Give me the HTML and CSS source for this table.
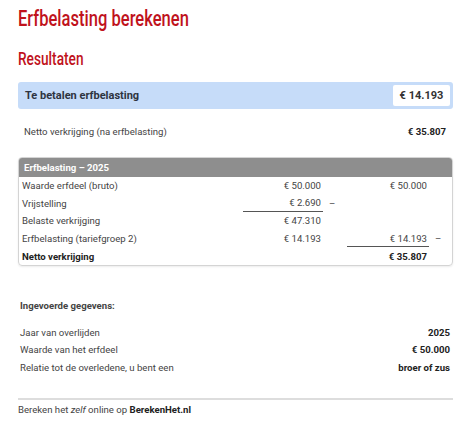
FILE: index.html
```html
<!DOCTYPE html>
<html lang="nl">
<head>
<meta charset="utf-8">
<link rel="stylesheet" href="styles.css">
</head>
<body>
<div class="page">
  <h1 class="title"><span class="narrow">Erfbelasting berekenen</span></h1>
  <h2 class="subtitle"><span class="narrow">Resultaten</span></h2>

  <div class="pay">
    <span class="pay-label">Te betalen erfbelasting</span>
    <span class="pay-value">€ 14.193</span>
  </div>

  <div class="net">
    <span>Netto verkrijging (na erfbelasting)</span>
    <strong>€ 35.807</strong>
  </div>

  <div class="calc">
    <div class="calc-head">Erfbelasting – 2025</div>
    <div class="calc-row">
      <span class="c-label">Waarde erfdeel (bruto)</span>
      <span class="c-a">€ 50.000</span><span class="c-op"></span>
      <span class="c-b">€ 50.000</span><span class="c-op"></span>
    </div>
    <div class="calc-row">
      <span class="c-label">Vrijstelling</span>
      <span class="c-a line">€ 2.690</span><span class="c-op">–</span>
      <span class="c-b"></span><span class="c-op"></span>
    </div>
    <div class="calc-row">
      <span class="c-label">Belaste verkrijging</span>
      <span class="c-a">€ 47.310</span><span class="c-op"></span>
      <span class="c-b"></span><span class="c-op"></span>
    </div>
    <div class="calc-row">
      <span class="c-label">Erfbelasting (tariefgroep 2)</span>
      <span class="c-a">€ 14.193</span><span class="c-op"></span>
      <span class="c-b line">€ 14.193</span><span class="c-op">–</span>
    </div>
    <div class="calc-row total">
      <span class="c-label">Netto verkrijging</span>
      <span class="c-a"></span><span class="c-op"></span>
      <span class="c-b">€ 35.807</span><span class="c-op"></span>
    </div>
  </div>

  <div class="input">
    <div class="input-title">Ingevoerde gegevens:</div>
    <div class="input-row"><span>Jaar van overlijden</span><strong>2025</strong></div>
    <div class="input-row"><span>Waarde van het erfdeel</span><strong>€ 50.000</strong></div>
    <div class="input-row"><span>Relatie tot de overledene, u bent een</span><strong>broer of zus</strong></div>
  </div>

  <div class="footer">Bereken het <em>zelf</em> online op <strong>BerekenHet.nl</strong></div>
</div>
</body>
</html>
```

FILE: styles.css
```css
* { box-sizing: border-box; }
html, body { margin: 0; padding: 0; background: #fff; }
body {
  font-family: Roboto, "Liberation Sans", sans-serif;
  font-size: 9.6px;
  color: #444;
}
.page {
  padding: 6px 21px 0 18px;
}
.title, .subtitle {
  margin: 0;
  font-family: Roboto, "Liberation Sans", sans-serif;
  font-weight: 500;
  color: #c0121c;
}
.narrow {
  display: inline-block;
  transform-origin: left center;
  white-space: nowrap;
}
.title {
  font-size: 21.5px;
  line-height: 26px;
}
.title .narrow { transform: scaleX(0.77); }
.subtitle {
  margin-top: 16px;
  font-size: 18px;
  line-height: 22px;
}
.subtitle .narrow { transform: scaleX(0.76); }
.pay {
  margin-top: 12px;
  height: 27px;
  background: #c6dcf9;
  border-radius: 3px;
  display: flex;
  align-items: center;
  justify-content: space-between;
  padding: 0 3px 0 7px;
}
.pay-label {
  font-weight: 700;
  font-size: 11px;
  color: #2e3440;
}
.pay-value {
  background: #fff;
  height: 21px;
  width: 57px;
  display: flex;
  align-items: center;
  justify-content: center;
  font-weight: 700;
  font-size: 11px;
  color: #333;
  border-radius: 2px;
}
.net {
  margin-top: 13px;
  height: 18px;
  display: flex;
  align-items: center;
  justify-content: space-between;
  padding: 0 7px 0 6px;
}
.net strong { color: #222; font-weight: 700; }
.calc {
  margin-top: 17px;
  border: 1px solid #d4d4d4;
  border-radius: 4px;
  overflow: hidden;
  box-shadow: 0 1px 2px rgba(0,0,0,0.08);
}
.calc-head {
  background: #8e8e8e;
  color: #fff;
  font-weight: 700;
  height: 19px;
  display: flex;
  align-items: center;
  padding-left: 5px;
}
.calc-row {
  display: grid;
  grid-template-columns: 1fr 80px 24px 82px 23px;
  height: 17.6px;
  align-items: stretch;
  padding-left: 3px;
}
.calc-row > span {
  display: flex;
  align-items: center;
}
.c-a, .c-b {
  justify-content: flex-end;
  padding-right: 2px;
}
.c-op { padding-left: 6px; }
.line { border-bottom: 1px solid #555; }
.total { font-weight: 700; color: #222; }
.input { margin-top: 31px; }
.input-title {
  font-weight: 700;
  color: #444;
  height: 18px;
  display: flex;
  align-items: center;
  padding-left: 2px;
  margin-bottom: 9px;
}
.input-row {
  height: 17.3px;
  display: flex;
  align-items: center;
  justify-content: space-between;
  padding: 0 3px 0 2px;
}
.input-row strong { color: #222; }
.footer {
  margin-top: 22px;
  border-top: 2px solid #ddd;
  padding-top: 4px;
  color: #444;
}
.footer strong { color: #222; }
```
